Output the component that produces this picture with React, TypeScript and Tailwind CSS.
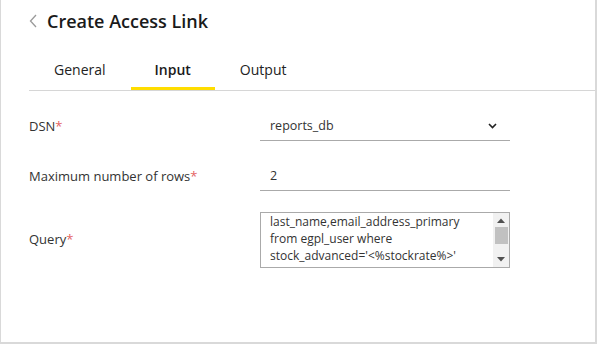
import { useEffect, useRef } from 'react'

const FONT = { fontFamily: '"Open Sans", "Liberation Sans", sans-serif' }

const TABS = ['General', 'Input', 'Output']

const QUERY =
  "select first_name,\nlast_name,email_address_primary\nfrom egpl_user where\nstock_advanced='<%stockrate%>'\norder by last_name"

export default function App() {
  const queryRef = useRef<HTMLTextAreaElement>(null)

  // the reference shows the query scrolled down by one line
  useEffect(() => {
    if (queryRef.current) queryRef.current.scrollTop = 17
  }, [])

  return (
    <div
      style={FONT}
      className="h-[344px] w-[597px] overflow-hidden border-b-2 border-l border-r-2 border-[#d9d9d9] bg-white text-[#333]"
    >
      <div className="flex h-[42px] items-center pl-[28px]">
        <svg width="9" height="14" viewBox="0 0 9 14" className="mr-[9px]">
          <path d="M7 1 L1.5 7 L7 13" fill="none" stroke="#9a9a9a" strokeWidth="1.3" />
        </svg>
        <h1 className="text-[18px] font-semibold leading-none text-[#1a1a1a]">Create Access Link</h1>
      </div>

      <div className="ml-[28px] mt-[8px] flex border-b border-[#d6d6d6]">
        {TABS.map((t) => (
          <div
            key={t}
            className={
              t === 'Input'
                ? 'flex h-[40px] items-center border-b-[3px] border-[#ffdd00] px-[24px] pt-[1px] text-[14px] font-semibold text-[#1a1a1a]'
                : 'flex h-[40px] items-center border-b-[3px] border-transparent px-[25px] pt-[1px] text-[14px] text-[#222]'
            }
          >
            {t}
          </div>
        ))}
      </div>

      <div className="ml-[28px] mt-[21px] grid grid-cols-[231px_250px] items-center gap-y-[21px] text-[13px]">
        <Label text="DSN" />
        <div className="flex h-[29px] items-center justify-between border-b border-[#aaaaaa] pl-[10px] pr-[13px] text-[12.5px]">
          <span>reports_db</span>
          <svg width="9" height="6" viewBox="0 0 9 6">
            <path d="M1 1 L4.5 4.5 L8 1" fill="none" stroke="#222" strokeWidth="1.6" />
          </svg>
        </div>

        <Label text="Maximum number of rows" />
        <div className="flex h-[29px] items-center border-b border-[#aaaaaa] pl-[10px] text-[12.5px]">
          <span>2</span>
        </div>

        <Label text="Query" />
        <div className="flex h-[56px] w-[250px] border border-[#aaaaaa]">
          <textarea
            ref={queryRef}
            readOnly
            defaultValue={QUERY}
            className="min-w-0 flex-1 resize-none overflow-y-scroll whitespace-pre pl-[9px] pt-0 text-[12px] leading-[17px] text-[#333] outline-none [scrollbar-width:none]"
          />
          <div className="flex w-[16px] flex-col items-center bg-[#f1f1f1] py-[5px]">
            <svg width="8" height="5" viewBox="0 0 8 5">
              <path d="M0 5 L4 0.5 L8 5 Z" fill="#505050" />
            </svg>
            <div className="mt-[4px] h-[17px] w-[13px] bg-[#c1c1c1]" />
            <div className="flex-1" />
            <svg width="8" height="5" viewBox="0 0 8 5">
              <path d="M0 0 L4 4.5 L8 0 Z" fill="#505050" />
            </svg>
          </div>
        </div>
      </div>
    </div>
  )
}

function Label({ text }: { text: string }) {
  return (
    <div>
      {text}
      <span className="text-[#e46464]">*</span>
    </div>
  )
}
